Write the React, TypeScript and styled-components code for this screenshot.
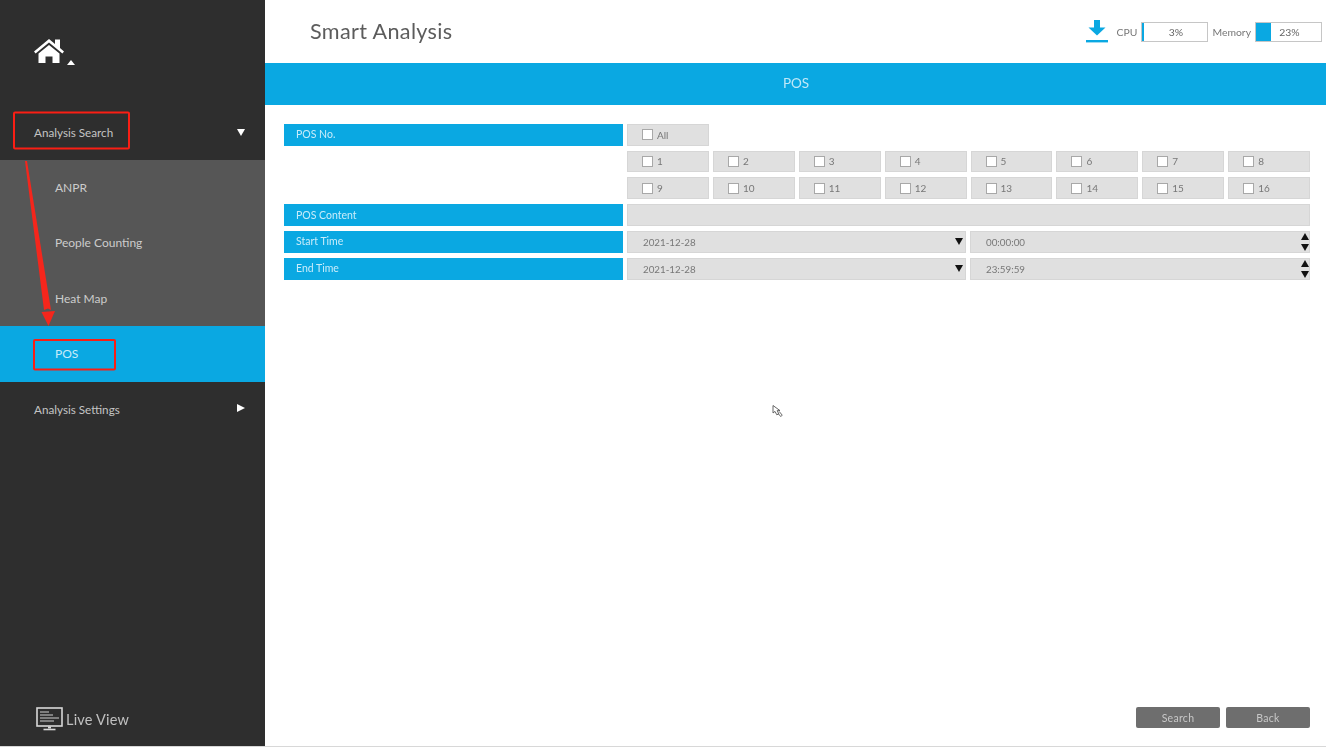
import React from "react";
import styled, { createGlobalStyle } from "styled-components";

const Global = createGlobalStyle`
  html, body { margin: 0; padding: 0; background: #fff; }
  body { font-family: "Lato", "Liberation Sans", sans-serif; }
  #root { width: 1326px; height: 747px; overflow: hidden; }
`;

const BLUE = "#0aa8e2";

const Page = styled.div`
  position: relative;
  display: flex;
  width: 1326px;
  height: 746px;
  border-bottom: 1px solid #d8d8d8;
  overflow: hidden;
  filter: blur(0.35px);
`;

const Sidebar = styled.aside`
  width: 265px;
  flex: none;
  display: flex;
  flex-direction: column;
  background: #2e2e2e;
  color: #c4c4c4;
`;

const Brand = styled.div`
  height: 105px;
  flex: none;
  padding: 38px 0 0 34px;
  box-sizing: border-box;
  display: flex;
  align-items: flex-start;
  gap: 3px;
`;

const BrandCaret = styled.span`
  width: 0;
  height: 0;
  margin-top: 22px;
  border-left: 4px solid transparent;
  border-right: 4px solid transparent;
  border-bottom: 5px solid #fff;
`;

const MenuRow = styled.div<{ $h: number }>`
  height: ${(p) => p.$h}px;
  flex: none;
  box-sizing: border-box;
  display: flex;
  align-items: center;
  justify-content: space-between;
  padding: 0 20px 1px 34px;
  font-size: 11.7px;
  color: #c4c4c4;
`;

const SubMenu = styled.div`
  display: flex;
  flex-direction: column;
  background: #565656;
`;

const SubRow = styled.div<{ $active?: boolean; $h: number }>`
  height: ${(p) => p.$h}px;
  display: flex;
  align-items: center;
  padding-left: 55px;
  font-size: 12px;
  background: ${(p) => (p.$active ? BLUE : "transparent")};
  color: ${(p) => (p.$active ? "#c9ecfa" : "#cccccc")};
`;

const CaretDown = styled.span`
  width: 0;
  height: 0;
  border-left: 4px solid transparent;
  border-right: 4px solid transparent;
  border-top: 7px solid #fff;
`;

const CaretRight = styled.span`
  width: 0;
  height: 0;
  margin: -2px 0 0;
  border-top: 4px solid transparent;
  border-bottom: 4px solid transparent;
  border-left: 8px solid #fff;
`;

const LiveView = styled.div`
  margin-top: auto;
  height: 54px;
  display: flex;
  align-items: center;
  gap: 3px;
  padding: 0 0 0 36px;
  font-size: 14.5px;
  color: #c0c0c0;
  letter-spacing: 0.2px;
`;

const Main = styled.main`
  flex: 1;
  min-width: 0;
  display: flex;
  flex-direction: column;
`;

const Header = styled.header`
  height: 63px;
  flex: none;
  display: flex;
  align-items: center;
  justify-content: space-between;
  padding: 0 4px 0 45px;
`;

const Title = styled.h1`
  margin: 0 0 2px;
  font-size: 21.6px;
  font-weight: 400;
  color: #5c5c5c;
  letter-spacing: 0.35px;
`;

const Stats = styled.div`
  display: flex;
  align-items: center;
  font-size: 10.4px;
  color: #777;
`;

const StatLabel = styled.span<{ $l: number; $r: number }>`
  margin-left: ${(p) => p.$l}px;
  margin-right: ${(p) => p.$r}px;
`;

const Meter = styled.div`
  position: relative;
  width: 67px;
  height: 20px;
  box-sizing: border-box;
  border: 1px solid #c6c6c6;
  background: #fff;
`;

const MeterFill = styled.div`
  height: 100%;
  background: ${BLUE};
`;

const MeterText = styled.span`
  position: absolute;
  inset: 0;
  display: flex;
  align-items: center;
  justify-content: center;
  padding-left: 2px;
  color: #666;
`;

const Band = styled.div`
  height: 42px;
  flex: none;
  box-sizing: border-box;
  display: flex;
  align-items: center;
  justify-content: center;
  background: ${BLUE};
  color: #bfe8f8;
  font-size: 13.5px;
  padding: 0 0 2px 1px;
`;

const Form = styled.div`
  display: grid;
  grid-template-columns: 339px 1fr;
  grid-auto-rows: 21.8px;
  row-gap: 5px;
  column-gap: 4px;
  padding: 18.8px 16px 0 19px;
`;

const Label = styled.div`
  display: flex;
  align-items: center;
  padding: 0 0 1px 12px;
  background: ${BLUE};
  color: #c9ecfa;
  font-size: 10.5px;
`;

const CheckGrid = styled.div`
  grid-column: 2;
  display: grid;
  grid-template-columns: repeat(8, 1fr);
  column-gap: 4px;
`;

const CheckCell = styled.label`
  display: flex;
  align-items: center;
  gap: 4px;
  padding-left: 14px;
  box-sizing: border-box;
  background: #e0e0e0;
  border: 1px solid #d6d6d6;
  color: #777;
  font-size: 10px;
`;

const Box = styled.span`
  width: 9px;
  height: 9px;
  flex: none;
  background: #fff;
  border: 1px solid #a8a8a8;
`;

const Field = styled.div`
  background: #e0e0e0;
  border: 1px solid #d6d6d6;
`;

const TimePair = styled.div`
  display: grid;
  grid-template-columns: 339px 340px;
  column-gap: 4px;
`;

const Input = styled.div`
  display: flex;
  align-items: center;
  justify-content: space-between;
  padding-left: 15px;
  background: #e0e0e0;
  border: 1px solid #d6d6d6;
  color: #777;
  font-size: 9.8px;
`;

const DropCaret = styled.span`
  width: 0;
  height: 0;
  margin-right: 2px;
  border-left: 4.5px solid transparent;
  border-right: 4.5px solid transparent;
  border-top: 7px solid #111;
`;

const Spinner = styled.span`
  display: flex;
  flex-direction: column;
  gap: 4px;
`;

const SpinUp = styled.span`
  width: 0;
  height: 0;
  border-left: 4.5px solid transparent;
  border-right: 4.5px solid transparent;
  border-bottom: 7px solid #111;
`;

const SpinDown = styled(SpinUp)`
  border-bottom: 0;
  border-top: 7px solid #111;
`;

const Footer = styled.footer`
  margin-top: auto;
  display: flex;
  justify-content: flex-end;
  gap: 6px;
  padding: 0 16px 18px 0;
`;

const Button = styled.button`
  width: 84px;
  height: 21px;
  padding: 0;
  border: 0;
  border-radius: 2px;
  background: #6e6e6e;
  color: #c8c8c8;
  font: inherit;
  font-size: 10.5px;
  letter-spacing: 0.3px;
`;

const Overlay = styled.svg`
  position: absolute;
  left: 0;
  top: 0;
  pointer-events: none;
`;

const HomeIcon = () => (
  <svg width="30" height="26" viewBox="0 0 30 26">
    <path d="M0 13.5 15 1l6 5V1.5h5V10l4 3.5-1.6 2L15 4.5 1.6 15.5z" fill="#fff" />
    <path d="M4.5 15.5 15 7l10.5 8.5V25H18.5v-6.5h-7V25h-7z" fill="#fff" />
  </svg>
);

const MonitorIcon = () => (
  <svg width="27" height="25" viewBox="0 0 27 25" fill="none">
    <rect x="1" y="1" width="25" height="18" stroke="#d8d8d8" strokeWidth="1.6" />
    <path d="M4 5h9M4 8h13M4 11h19M4 14h14" stroke="#d0d0d0" strokeWidth="1.2" />
    <path d="M12 19.5h3v2h-3z" fill="#d8d8d8" />
    <path d="M7.5 22.5h12" stroke="#d8d8d8" strokeWidth="1.6" />
  </svg>
);

const DownloadIcon = () => (
  <svg width="22" height="23" viewBox="0 0 22 23">
    <path d="M8 0h6v7.5h5.5L11 15.5 2.5 7.5H8z" fill={BLUE} />
    <rect x="0" y="20" width="22" height="2.4" fill={BLUE} />
  </svg>
);

const nums = (from: number) => Array.from({ length: 8 }, (_, i) => from + i);

const Check = ({ text }: { text: string | number }) => (
  <CheckCell>
    <Box />
    {text}
  </CheckCell>
);

export default function App() {
  return (
    <Page>
      <Global />
      <Sidebar>
        <Brand>
          <HomeIcon />
          <BrandCaret />
        </Brand>
        <MenuRow $h={55}>
          <span>Analysis Search</span>
          <CaretDown />
        </MenuRow>
        <SubMenu>
          <SubRow $h={55.33}>ANPR</SubRow>
          <SubRow $h={55.33}>People Counting</SubRow>
          <SubRow $h={55.33}>Heat Map</SubRow>
          <SubRow $h={56} $active>POS</SubRow>
        </SubMenu>
        <MenuRow $h={55}>
          <span>Analysis Settings</span>
          <CaretRight />
        </MenuRow>
        <LiveView>
          <MonitorIcon />
          Live View
        </LiveView>
      </Sidebar>
      <Main>
        <Header>
          <Title>Smart Analysis</Title>
          <Stats>
            <DownloadIcon />
            <StatLabel $l={9} $r={4}>CPU</StatLabel>
            <Meter>
              <MeterFill style={{ width: "3%" }} />
              <MeterText>3%</MeterText>
            </Meter>
            <StatLabel $l={4} $r={4}>Memory</StatLabel>
            <Meter>
              <MeterFill style={{ width: "23%" }} />
              <MeterText>23%</MeterText>
            </Meter>
          </Stats>
        </Header>
        <Band>POS</Band>
        <Form>
          <Label>POS No.</Label>
          <CheckGrid>
            <Check text="All" />
          </CheckGrid>
          <CheckGrid>
            {nums(1).map((n) => (
              <Check key={n} text={n} />
            ))}
          </CheckGrid>
          <CheckGrid>
            {nums(9).map((n) => (
              <Check key={n} text={n} />
            ))}
          </CheckGrid>
          <Label>POS Content</Label>
          <Field />
          <Label>Start Time</Label>
          <TimePair>
            <Input>
              2021-12-28
              <DropCaret />
            </Input>
            <Input>
              00:00:00
              <Spinner>
                <SpinUp />
                <SpinDown />
              </Spinner>
            </Input>
          </TimePair>
          <Label>End Time</Label>
          <TimePair>
            <Input>
              2021-12-28
              <DropCaret />
            </Input>
            <Input>
              23:59:59
              <Spinner>
                <SpinUp />
                <SpinDown />
              </Spinner>
            </Input>
          </TimePair>
        </Form>
        <Footer>
          <Button>Search</Button>
          <Button>Back</Button>
        </Footer>
      </Main>
      <Overlay width="1326" height="746" viewBox="0 0 1326 746" fill="none">
        <rect x="14" y="112.5" width="115" height="36" rx="1" stroke="#fa1e14" strokeWidth="2" />
        <rect x="34" y="340" width="81" height="29.5" rx="1" stroke="#fa1e14" strokeWidth="2" />
        <path d="M25 161 44 310l4-1.5L51 310 27 161z" fill="#f5261c" />
        <path d="M41.5 312 48.5 326 55 311z" fill="#f5261c" />
        <path
          d="M773 405.5v7.5l2-1.6 1.8 3.4 2-.9-1.6-3.3h2.8zM779.2 411.5l3 3.6-1.4 1.5-2.6-3"
          fill="#fff"
          stroke="#555"
          strokeWidth="0.9"
        />
      </Overlay>
    </Page>
  );
}
